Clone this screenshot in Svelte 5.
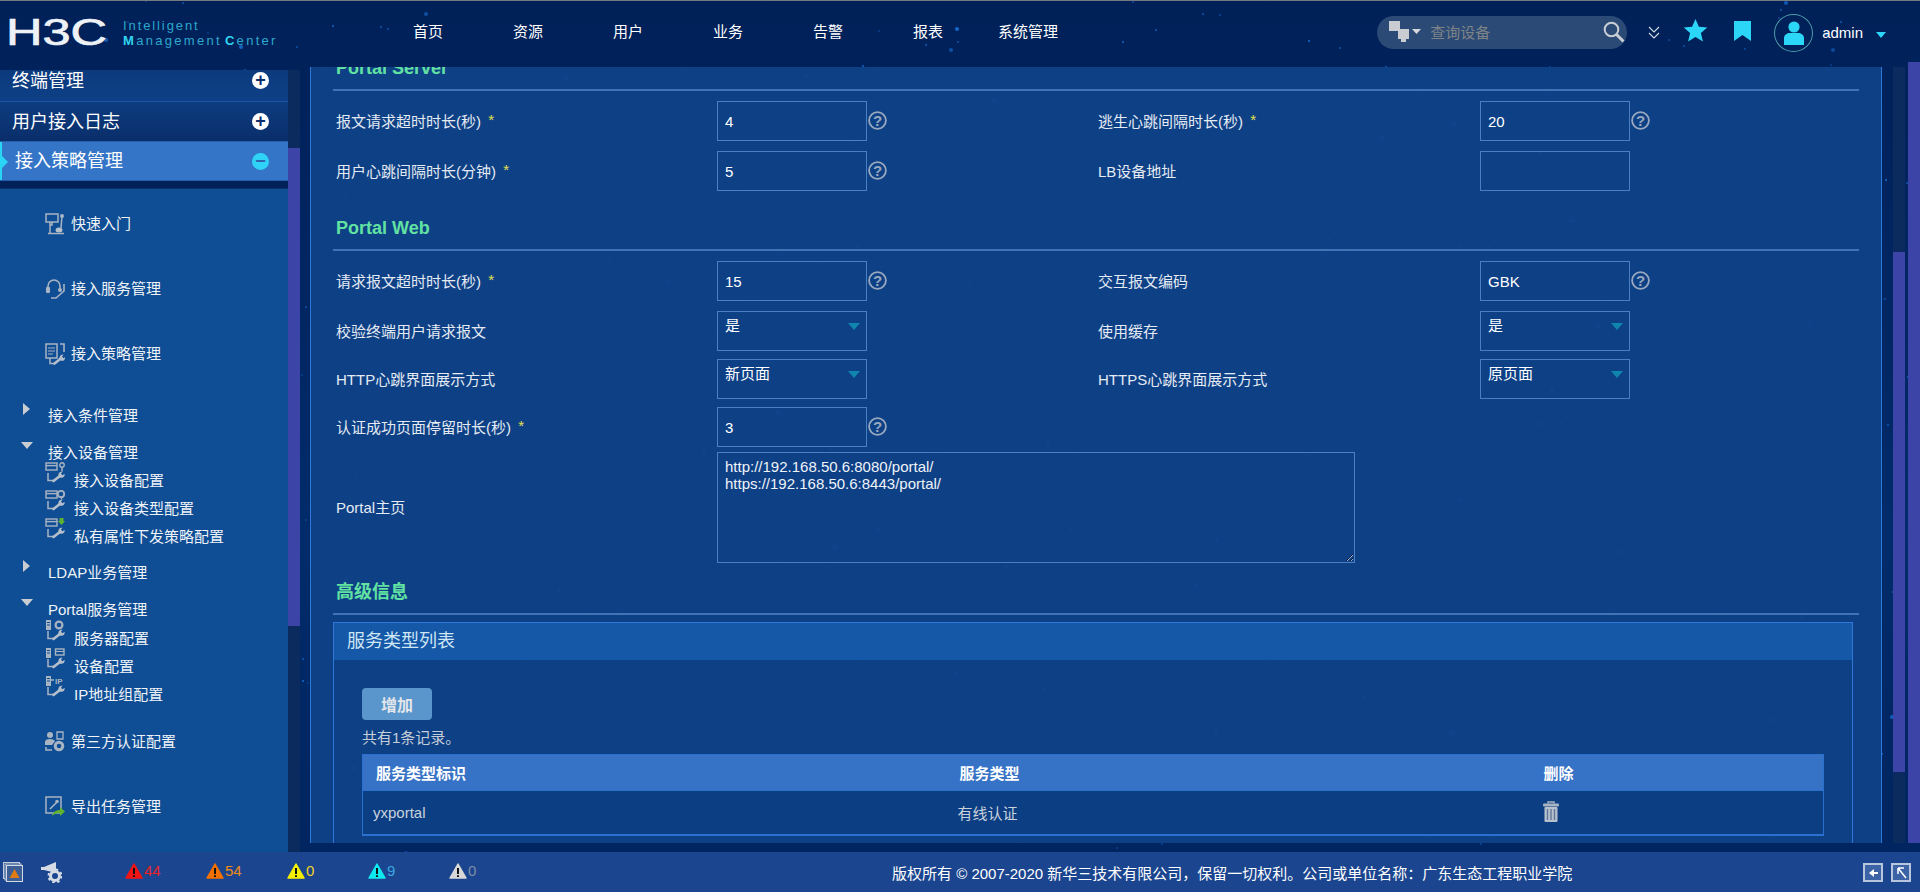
<script>
  let seed = 7;
  const rnd = () => { seed = (seed * 16807) % 2147483647; return seed / 2147483647; };
  const stars = Array.from({ length: 620 }, () => ({
    x: Math.round(rnd() * 1920), y: Math.round(rnd() * 892),
    r: rnd() < 0.15 ? 2 : 1, o: 0.35 + rnd() * 0.6
  }));
  const nav = ['首页','资源','用户','业务','告警','报表','系统管理'];
  const alerts = [
    { fill:'#f01414', num:'44', color:'#e8232a' },
    { fill:'#f07000', num:'54', color:'#ef8a17' },
    { fill:'#f5f000', num:'0', color:'#f3d51e' },
    { fill:'#10e8f0', num:'9', color:'#3aa6e0' },
    { fill:'#d8d8d8', num:'0', color:'#7f8ea6' }
  ];
</script>

{#snippet wrench()}
  <path d="M3 11v7.500h6" fill="none" stroke="#a9b4c2" stroke-width="1.500"/>
  <path d="M8.500 19l7-5.500" fill="none" stroke="#b6c0cc" stroke-width="2.600" stroke-linecap="round"/>
  <path d="M14 15c-1.500-2.500 0-5.500 3.500-5.500l-1.500 2.300 1.200 1.500 2.500-1.200c.3 3-2.700 4.900-5.700 2.900z" fill="#b6c0cc"/>
{/snippet}
{#snippet winbox()}
  <rect x="1" y="1" width="11" height="7" fill="none" stroke="#a9b4c2" stroke-width="1.4"/>
  <path d="M1 3.600h11" stroke="#a9b4c2" stroke-width="1.4"/>
{/snippet}
{#snippet tower()}
  <rect x="1" y="0" width="5" height="10" fill="#a9b4c2"/>
  <path d="M2 2.500h3M2 5h3" stroke="#0f4d94"/>
{/snippet}
{#snippet help()}
  <svg class="help" width="19" height="19" viewBox="0 0 19 19">
    <circle cx="9.5" cy="9.5" r="8.4" fill="none" stroke="#9aa8bf" stroke-width="1.8"/>
    <text x="9.5" y="14.5" text-anchor="middle" class="helpq">?</text>
  </svg>
{/snippet}
{#snippet req()}<span class="req">*</span>{/snippet}

<div class="app">
  <svg class="stars" width="1920" height="892" aria-hidden="true">
    {#each stars as s}<circle cx={s.x} cy={s.y} r={s.r} fill="#1a6fd6" opacity={s.o}/>{/each}
  </svg>

  <header class="top">
    <div class="logo">
      <svg class="logosvg" width="104" height="30" viewBox="0 0 104 30">
        <text x="0" y="28" textLength="101" lengthAdjust="spacingAndGlyphs" class="h3c">H3C</text>
      </svg>
      <div class="imc">
        <div class="l1">Intelligent</div>
        <div class="l2"><b>M</b>anagement<b class="cc">C</b>enter</div>
      </div>
    </div>
    <nav class="nav">
      {#each nav as n}<span>{n}</span>{/each}
    </nav>
    <div class="tools">
      <div class="search">
        <svg width="32" height="24" viewBox="0 0 32 24">
          <rect x="0" y="1" width="11" height="10" fill="#c9cdd2"/>
          <rect x="9" y="9" width="11" height="10" fill="#c9cdd2"/>
          <rect x="12" y="19" width="5" height="3" fill="#c9cdd2"/>
          <path d="M23 9h9l-4.5 5z" fill="#d5d8dc"/>
        </svg>
        <span class="ph">查询设备</span>
        <svg class="mag" width="22" height="22" viewBox="0 0 22 22">
          <circle cx="8.5" cy="8.5" r="6.8" fill="none" stroke="#c9ced4" stroke-width="2"/>
          <path d="M13.5 13.5l7 7" stroke="#c9ced4" stroke-width="3"/>
        </svg>
      </div>
      <svg class="chev" width="12" height="13" viewBox="0 0 12 13">
        <path d="M1 1l5 5 5-5M1 7l5 5 5-5" fill="none" stroke="#d5dde6" stroke-width="1.1"/>
      </svg>
      <svg class="star" width="25" height="23" viewBox="0 0 25 23">
        <path d="M12.5 0l3.4 7.7 8.4.8-6.4 5.5 2 8.4-7.4-4.5-7.4 4.5 2-8.4L.7 8.5l8.4-.8z" fill="#2bd6f7"/>
      </svg>
      <svg class="mark" width="17" height="20" viewBox="0 0 17 20">
        <path d="M0 0h17v20l-8.5-6L0 20z" fill="#2bd6f7"/>
      </svg>
      <div class="avatar">
        <svg width="20" height="24" viewBox="0 0 20 24">
          <circle cx="10" cy="6" r="5.6" fill="#2bd6f7"/>
          <path d="M0 24v-7c0-3 3-5 6-5h8c3 0 6 2 6 5v7z" fill="#2bd6f7"/>
        </svg>
      </div>
      <span class="user">admin</span>
      <span class="caret"></span>
    </div>
  </header>

  <div class="mid">
    <aside class="side">
      <div class="sh r1"><span>终端管理</span><i class="pm">+</i></div>
      <div class="sh r2"><span>用户接入日志</span><i class="pm">+</i></div>
      <div class="sh act"><span>接入策略管理</span><i class="pm cy">−</i></div>
      <div class="band"></div>
      <div class="tree">
        <div class="big">
          <svg width="20" height="22" viewBox="0 0 20 22">
            <rect x="1" y="1" width="12" height="8" fill="none" stroke="#a9b4c2" stroke-width="1.5"/>
            <path d="M5 9v11M3 20.500h16M7 9v3h-2" fill="none" stroke="#a9b4c2" stroke-width="1.5"/>
            <path d="M17 3l-1 12" stroke="#a9b4c2" stroke-width="1.500"/>
            <circle cx="17" cy="3" r="2" fill="#a9b4c2"/>
            <ellipse cx="14" cy="17" rx="3.500" ry="2.500" fill="#b6c0cc"/>
          </svg>
          <span>快速入门</span>
        </div>
        <div class="big">
          <svg width="20" height="22" viewBox="0 0 20 22">
            <path d="M3 12V8a6 6 0 0 1 12 0v3" fill="none" stroke="#a9b4c2" stroke-width="1.6"/>
            <rect x="1" y="9" width="4" height="6" rx="1" fill="#a9b4c2"/>
            <path d="M19 6v7l-8 7H6" fill="none" stroke="#a9b4c2" stroke-width="1.6"/>
            <circle cx="15" cy="12" r="2" fill="#a9b4c2"/>
          </svg>
          <span>接入服务管理</span>
        </div>
        <div class="big">
          <svg width="20" height="22" viewBox="0 0 20 22">
            <rect x="1" y="1" width="11" height="14" fill="none" stroke="#a9b4c2" stroke-width="1.5"/>
            <path d="M3 5h7M3 8h7M3 11h5" stroke="#a9b4c2" stroke-width="1.2"/>
            <path d="M15 1h4v8" fill="none" stroke="#a9b4c2" stroke-width="1.6"/>
            <path d="M5 15v5.500h5" fill="none" stroke="#a9b4c2" stroke-width="1.500"/>
            <path d="M9.500 20.500l7-5.500" fill="none" stroke="#b6c0cc" stroke-width="2.600" stroke-linecap="round"/>
            <path d="M15 17c-1.500-2.500 0-5.500 3.500-5.500l-1.500 2.300 1 1.500 2-1c.3 3-2.500 4.700-5 2.700z" fill="#b6c0cc"/>
          </svg>
          <span>接入策略管理</span>
        </div>

        <div class="grp closed"><i class="tri-r"></i><span>接入条件管理</span></div>
        <div class="grp open"><i class="tri-d"></i><span>接入设备管理</span></div>
        <div class="kid">
          <svg width="20" height="21" viewBox="0 0 20 21">{@render winbox()}{@render wrench()}<circle cx="17" cy="3" r="2.200" fill="none" stroke="#a9b4c2" stroke-width="1.4"/><path d="M17 5.500v4" stroke="#a9b4c2" stroke-width="1.500"/></svg>
          <span>接入设备配置</span>
        </div>
        <div class="kid">
          <svg width="20" height="21" viewBox="0 0 20 21">{@render winbox()}{@render wrench()}<circle cx="16" cy="4" r="3.200" fill="none" stroke="#a9b4c2" stroke-width="1.800"/><path d="M16.500 7.500v2" stroke="#a9b4c2" stroke-width="1.500"/></svg>
          <span>接入设备类型配置</span>
        </div>
        <div class="kid">
          <svg width="20" height="21" viewBox="0 0 20 21">{@render winbox()}{@render wrench()}<path d="M14.500 0h4v3h1.500l-3.500 4-3.500-4h1.500z" fill="#5fb32e"/></svg>
          <span>私有属性下发策略配置</span>
        </div>
        <div class="grp ldap"><i class="tri-r"></i><span>LDAP业务管理</span></div>
        <div class="grp portal"><i class="tri-d"></i><span>Portal服务管理</span></div>
        <div class="kid k1">
          <svg width="20" height="21" viewBox="0 0 20 21">{@render tower()}{@render wrench()}<circle cx="14" cy="5" r="3.400" fill="none" stroke="#a9b4c2" stroke-width="2.200"/></svg>
          <span>服务器配置</span>
        </div>
        <div class="kid">
          <svg width="20" height="21" viewBox="0 0 20 21">{@render tower()}{@render wrench()}<rect x="10.500" y="1" width="8.500" height="6" fill="none" stroke="#a9b4c2" stroke-width="1.400"/><path d="M10.500 3.500h8.500" stroke="#a9b4c2"/></svg>
          <span>设备配置</span>
        </div>
        <div class="kid">
          <svg width="20" height="21" viewBox="0 0 20 21">{@render tower()}{@render wrench()}<path d="M6 4h3" stroke="#a9b4c2" stroke-width="1.500"/><text x="10" y="7.500" class="ip">IP</text></svg>
          <span>IP地址组配置</span>
        </div>
        <div class="big">
          <svg width="20" height="21" viewBox="0 0 20 21">
            <circle cx="5" cy="4" r="3" fill="#a9b4c2"/>
            <path d="M0 14v-3c0-2 2-3 5-3s4 1 5 2l-3 4z" fill="#a9b4c2"/>
            <path d="M12 1h6v7h-6z" fill="none" stroke="#a9b4c2" stroke-width="1.3"/>
            <circle cx="14" cy="15" r="3.800" fill="none" stroke="#a9b4c2" stroke-width="3"/>
            <path d="M1 16v3h6" fill="none" stroke="#a9b4c2" stroke-width="1.5"/>
          </svg>
          <span>第三方认证配置</span>
        </div>
        <div class="big">
          <svg width="20" height="21" viewBox="0 0 20 21">
            <rect x="1" y="1" width="15" height="16" fill="none" stroke="#a9b4c2" stroke-width="1.5"/>
            <path d="M5 13l7-7" stroke="#a9b4c2" stroke-width="1.600"/>
            <circle cx="12" cy="5.500" r="1.800" fill="#a9b4c2"/>
            <path d="M7 20c1-4 4-6 8-6v-3l5 4.500-5 4.500v-3c-3 0-6 1-8 3z" fill="#5fb32e"/>
          </svg>
          <span>导出任务管理</span>
        </div>
      </div>
    </aside>
    <div class="lscroll"><div class="lthumb"></div></div>

    <main class="panel">
      <div class="inner">
        <h3 class="sec first">Portal Server</h3>
        <div class="row g10">
          <div class="f"><label>报文请求超时时长(秒) {@render req()}</label><input readonly value="4"/>{@render help()}</div>
          <div class="f"><label>逃生心跳间隔时长(秒) {@render req()}</label><input readonly value="20"/>{@render help()}</div>
        </div>
        <div class="row">
          <div class="f"><label>用户心跳间隔时长(分钟) {@render req()}</label><input readonly value="5"/>{@render help()}</div>
          <div class="f"><label>LB设备地址</label><input readonly value=""/></div>
        </div>

        <h3 class="sec">Portal Web</h3>
        <div class="row g10">
          <div class="f"><label>请求报文超时时长(秒) {@render req()}</label><input readonly value="15"/>{@render help()}</div>
          <div class="f"><label>交互报文编码</label><input readonly value="GBK"/>{@render help()}</div>
        </div>
        <div class="row g8">
          <div class="f"><label>校验终端用户请求报文</label><div class="sel">是</div></div>
          <div class="f"><label>使用缓存</label><div class="sel">是</div></div>
        </div>
        <div class="row g8">
          <div class="f"><label>HTTP心跳界面展示方式</label><div class="sel">新页面</div></div>
          <div class="f"><label>HTTPS心跳界面展示方式</label><div class="sel">原页面</div></div>
        </div>
        <div class="row g5">
          <div class="f"><label>认证成功页面停留时长(秒) {@render req()}</label><input readonly value="3"/>{@render help()}</div>
        </div>
        <div class="f ta">
          <label>Portal主页</label>
          <textarea readonly>{'http://192.168.50.6:8080/portal/\nhttps://192.168.50.6:8443/portal/'}</textarea>
        </div>

        <h3 class="sec adv">高级信息</h3>
        <section class="box">
          <div class="boxhead">服务类型列表</div>
          <div class="boxbody">
            <button class="add">增加</button>
            <div class="count">共有1条记录。</div>
            <table>
              <colgroup><col class="c1"/><col class="c1"/><col/></colgroup>
              <thead><tr><th>服务类型标识</th><th>服务类型</th><th>删除</th></tr></thead>
              <tbody>
                <tr>
                  <td class="id">yxportal</td>
                  <td class="ty">有线认证</td>
                  <td>
                    <svg width="16" height="21" viewBox="0 0 16 21">
                      <path d="M5 2.500V1h6v1.500" fill="none" stroke="#a9b4c2" stroke-width="1.500"/>
                      <rect x="0" y="2.500" width="16" height="3" rx="1" fill="#a9b4c2"/>
                      <rect x="1.500" y="6" width="13" height="15" rx="1" fill="#b6c0cc"/>
                      <path d="M4.500 8v11M8 8v11M11.500 8v11" stroke="#5b7396" stroke-width="1.300"/>
                    </svg>
                  </td>
                </tr>
              </tbody>
            </table>
          </div>
        </section>
      </div>
    </main>

    <div class="gap"></div>
    <div class="rscroll"><div class="rthumb"></div></div>
    <div class="outer"></div>
  </div>

  <footer class="foot">
    <svg class="fi" width="20" height="20" viewBox="0 0 20 20">
      <rect x="0.500" y="0.500" width="16" height="16" fill="none" stroke="#c4ccd8"/>
      <rect x="2" y="2" width="16" height="16" fill="#1b458f" stroke="#c4ccd8"/>
      <rect x="3.500" y="3.500" width="16" height="16" fill="#3e5f95" stroke="#d4dbe5"/>
      <path d="M11.500 7l5 9h-10z" fill="#e07a14"/>
    </svg>
    <svg class="fg" width="21" height="21" viewBox="0 0 21 21">
      <path d="M0 5h3l12-5v12l-4-2-8-2H0z" fill="#d4dbe5"/>
      <circle cx="14" cy="14" r="4.500" fill="#1b458f" stroke="#d4dbe5" stroke-width="3"/>
      <circle cx="14" cy="14" r="6.500" fill="none" stroke="#d4dbe5" stroke-width="2" stroke-dasharray="2.500 2.600"/>
    </svg>
    <div class="alerts">
      {#each alerts as a}
        <div class="al">
          <svg width="18" height="16" viewBox="0 0 18 16">
            <path d="M9 1l8 14H1z" fill={a.fill} stroke={a.fill} stroke-width="1.500" stroke-linejoin="round"/>
            <path d="M9 5v6M9 12.200v1.800" stroke="#111" stroke-width="2"/>
          </svg>
          <span style={`color:${a.color}`}>{a.num}</span>
        </div>
      {/each}
    </div>
    <div class="copy">版权所有 © 2007-2020 新华三技术有限公司，保留一切权利。公司或单位名称：广东生态工程职业学院</div>
    <div class="fr">
      <svg width="20" height="19" viewBox="0 0 20 19">
        <rect x="1" y="1" width="18" height="17" fill="#3b63a6" stroke="#b7c6dc" stroke-width="2"/>
        <path d="M6 10l5-4v3h4v2h-4v3z" fill="#fff"/>
      </svg>
      <svg width="20" height="19" viewBox="0 0 20 19">
        <rect x="1" y="1" width="18" height="17" fill="#3b63a6" stroke="#b7c6dc" stroke-width="2"/>
        <path d="M7 5h6M7 5v6M7 5l8 10" fill="none" stroke="#fff" stroke-width="1.500"/>
      </svg>
    </div>
  </footer>
</div>

<style>
  :global(body) { margin: 0; background: #00245f; }
  .app, input, textarea, button, table {
    font-family: "Liberation Sans", "Noto Sans CJK SC", sans-serif;
    font-size: 15px;
  }
  .app {
    position: relative; isolation: isolate;
    width: 1920px; height: 892px; overflow: hidden;
    display: grid; grid-template-rows: 62px 790px 40px;
    background: linear-gradient(#002058, #012b6a 60%, #00245f);
    color: #eef3f8;
  }
  .stars { position: absolute; left: 0; top: 0; z-index: -1; }

  .top { display: flex; align-items: center; border-top: 1px solid #767a80; box-sizing: border-box; }
  .logo { display: flex; width: 378px; padding-left: 6px; box-sizing: border-box; align-items: center; }
  .logosvg { overflow: visible; }
  .h3c { font: 36px "Liberation Sans", sans-serif; fill: #eef2f6; stroke: #eef2f6; stroke-width: 0.7px; }
  .imc { margin-left: 13px; margin-top: 2px; font: 13px/15px "Liberation Sans", sans-serif; white-space: nowrap; }
  .l1 { letter-spacing: 1.9px; color: #2da8cc; }
  .l2 { letter-spacing: 2.3px; color: #2da8cc; }
  .l2 b { color: #2fd6ef; }
  .cc { margin-left: 3px; }
  .nav { display: flex; margin-top: -2px; }
  .nav span { width: 100px; text-align: center; color: #fff; }
  .tools { margin-left: auto; display: flex; align-items: center; }
  .search {
    width: 250px; height: 33px; margin-left: 0; border-radius: 17px; margin-top: 1px;
    background: #2b4a75; display: flex; align-items: center; padding-left: 12px; box-sizing: border-box;
  }
  .ph { margin-left: 9px; color: #7e8388; margin-top: -1px; }
  .mag { margin-left: auto; margin-right: 2px; }
  .chev { margin-left: 21px; margin-top: 2px; }
  .star { margin-left: 23px; margin-top: -3px; }
  .mark { margin-left: 26px; margin-top: -2px; }
  .avatar {
    width: 37px; height: 36px; margin-left: 23px; margin-top: 3px;
    border: 1px solid #4d9aa8; border-radius: 50%;
    display: flex; align-items: center; justify-content: center;
  }
  .user { margin-left: 9px; color: #fff; margin-top: 1px; }
  .caret { margin-left: 13px; margin-right: 34px; margin-top: 6px; border: 5px solid transparent; border-top: 6px solid #2bd6f7; border-bottom: 0; }

  .mid { display: flex; align-items: flex-start; min-height: 0; }
  .side { width: 288px; height: 782px; margin-top: 8px; display: flex; flex-direction: column; flex: none; }
  .sh { display: flex; align-items: center; justify-content: space-between; padding: 0 19px 0 12px; font-size: 18px; color: #fff; flex: none; }
  .sh span { position: relative; top: -2px; }
  .r1 { height: 32px; background: linear-gradient(#0c3a7d, #0e3f86); border-bottom: 1px solid #1a559f; box-sizing: border-box; padding-bottom: 10px; }
  .r2 { height: 39px; background: linear-gradient(#0d3c80, #0a2e6a); }
  .act {
    height: 40px; background: #3575c8; border-top: 1px solid #2560ac; border-bottom: 1px solid #2560ac;
    box-sizing: border-box; padding-left: 15px; position: relative;
  }
  .act::before { content: ""; position: absolute; left: 0; top: 0; bottom: 0; width: 2px; background: #2ad4f5; }
  .act::after { content: ""; position: absolute; left: 2px; top: 14px; border: 6px solid transparent; border-left: 6px solid #2ad4f5; border-right: 0; }
  .pm {
    width: 17px; height: 17px; border-radius: 50%; background: #fff; color: #0c2f6b;
    font: bold 18px/17px "Liberation Sans", sans-serif; text-align: center; font-style: normal;
  }
  .pm.cy { background: #2ed3f5; color: #2d64ad; }
  .band { height: 8px; background: #02205a; border-bottom: 1px solid #0a2f6c; box-sizing: border-box; flex: none; }
  .tree { flex: 1; background: #0f4d94; padding-top: 2px; }
  .tree span { position: relative; top: -2px; }
  .tree .big span { top: -1px; }
  .ip { font: bold 8px "Liberation Sans", sans-serif; fill: #a9b4c2; }
  .big { height: 65px; display: flex; align-items: center; padding-left: 45px; }
  .big span { margin-left: 6px; }
  .grp { height: 28px; display: flex; align-items: center; padding-left: 21px; position: relative; }
  .grp span { margin-left: 27px; }
  .grp i { position: absolute; top: 1px; }
  .closed { margin-top: 16px; }
  .open { margin-top: 9px; }
  .ldap { margin-top: 8px; }
  .portal { margin-top: 9px; }
  .tri-r { left: 23px; border: 6px solid transparent; border-left: 7px solid #c9ccd0; border-right: 0; }
  .tri-d { left: 21px; margin-top: 2px; border: 6px solid transparent; border-top: 7px solid #c9ccd0; border-bottom: 0; }
  .kid { height: 28px; display: flex; align-items: center; padding-left: 45px; }
  .kid svg { margin-top: -17px; flex: none; }
  .kid span { margin-left: 9px; }
  .k1 { margin-top: 1px; }

  .lscroll { width: 12px; height: 782px; margin-top: 8px; background: #0b2a5e; flex: none; }
  .lthumb { height: 478px; margin-top: 78px; background: #3c44a8; }

  .panel {
    width: 1572px; height: 776px; margin: 5px 0 0 10px; flex: none; box-sizing: border-box;
    background: rgba(15, 66, 136, 0.94);
    border-left: 1px solid #2d78d8; border-right: 1px solid #2d78d8;
    overflow: hidden;
  }
  .inner { margin-top: -11px; padding: 0 22px; }
  .sec {
    margin: 25px 0 10px; padding: 0 0 9px 3px; height: 24px; box-sizing: content-box;
    border-bottom: 2px solid #3f74b5;
    font: bold 18px/24px "Liberation Sans", "Noto Sans CJK SC", sans-serif; color: #62e2a2;
    width: 1523px;
  }
  .sec.first { margin-top: 0; }
  .sec.adv { margin: 17px 0 7px; }
  .row { display: grid; grid-template-columns: 762px 762px; height: 40px; padding-left: 3px; margin-bottom: 0; }
  .g10 { margin-bottom: 10px; }
  .g8 { margin-bottom: 8px; }
  .g5 { margin-bottom: 5px; }
  .f { display: grid; grid-template-columns: 381px 150px auto; align-items: center; justify-content: start; height: 40px; }
  .row .f:nth-child(2) { grid-template-columns: 382px 150px auto; }
  .f label { color: #e4ebf3; position: relative; top: -1px; }
  .req { color: #e5e04f; position: relative; top: -2px; margin-left: 3px; }
  input, .sel {
    width: 150px; height: 40px; box-sizing: border-box; background: transparent;
    border: 1px solid #4a7fc0; border-radius: 0; color: #fff; padding: 0 0 0 7px; outline: none;
  }
  .sel { position: relative; line-height: 27px; font-size: 15px; }
  .sel::after {
    content: ""; position: absolute; right: 6px; top: 11px;
    border: 6px solid transparent; border-top: 7px solid #0f86ae; border-bottom: 0;
  }
  .help { margin-left: 1px; margin-top: -2px; }
  .helpq { font: bold 15px "Liberation Sans", sans-serif; fill: #9aa8bf; }
  .ta { height: 111px; padding-left: 3px; grid-template-columns: 381px 638px; }
  textarea {
    width: 638px; height: 111px; box-sizing: border-box; background: transparent;
    border: 1px solid #4a7fc0; color: #eef3f8; padding: 5px 7px; line-height: 17px; outline: none; overflow: hidden;
  }
  .box { width: 1520px; border: 1px solid #2f78d8; box-sizing: border-box; height: 300px; }
  .boxhead { height: 37px; background: #1558a8; color: #cfe6f5; font-size: 18px; line-height: 37px; padding-left: 13px; }
  .boxbody { padding: 28px 28px 0; }
  .add {
    display: block; width: 70px; height: 32px; border: 0; border-radius: 4px;
    background: #5a96cc; color: #e3e6ea; font-size: 16px; font-weight: bold; padding: 0;
  }
  .count { margin-top: 8px; height: 26px; line-height: 20px; color: #c5ced8; }
  table { width: 1462px; border-collapse: collapse; table-layout: fixed; border: 1px solid #2b6fcf; border-bottom-width: 2px; }
  .c1 { width: 584px; }
  th { height: 35px; background: #3672c5; color: #fff; text-align: left; padding: 0 0 0 13px; font-weight: bold; border-bottom: 1px solid #2b6fcf; }
  td { height: 43px; background: #0c3e83; padding: 0 0 0 14px; color: #c9d2dc; }
  td svg { display: block; margin-top: -3px; margin-left: -2px; }
  .id { padding-left: 10px; }
  .ty { padding-left: 11px; }

  .gap { width: 11px; flex: none; }
  .rscroll { width: 12px; height: 776px; margin-top: 5px; background: #0b2a5e; flex: none; }
  .rthumb { height: 520px; margin-top: 185px; background: #3c44a8; }
  .outer { width: 12px; height: 781px; margin-left: 3px; background: #3c44a8; flex: none; }

  .foot { background: #1b458f; display: flex; align-items: center; position: relative; }
  .fi { margin-left: 3px; }
  .fg { margin-left: 18px; }
  .alerts { display: flex; margin-left: 63px; width: 405px; }
  .al { width: 81px; display: flex; align-items: center; gap: 1px; margin-top: -3px; }
  .copy { margin-left: 362px; color: #fff; white-space: nowrap; margin-top: 1px; }
  .fr { margin-left: auto; margin-right: 9px; display: flex; gap: 8px; margin-top: 1px; }
</style>
